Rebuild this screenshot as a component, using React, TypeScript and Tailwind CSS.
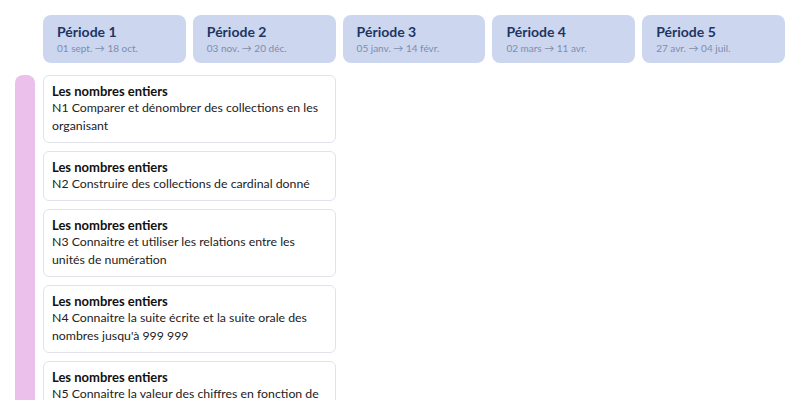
import React from 'react';

const PERIODS = [
  { name: 'Période 1', dates: '01 sept. → 18 oct.' },
  { name: 'Période 2', dates: '03 nov. → 20 déc.' },
  { name: 'Période 3', dates: '05 janv. → 14 févr.' },
  { name: 'Période 4', dates: '02 mars → 11 avr.' },
  { name: 'Période 5', dates: '27 avr. → 04 juil.' },
];

const ITEMS = [
  'N1 Comparer et dénombrer des collections en les organisant',
  'N2 Construire des collections de cardinal donné',
  'N3 Connaitre et utiliser les relations entre les unités de numération',
  "N4 Connaitre la suite écrite et la suite orale des nombres jusqu'à 999 999",
  'N5 Connaitre la valeur des chiffres en fonction de leur position dans un nombre',
];

export default function App() {
  return (
    <div className="h-[400px] w-[800px] overflow-hidden bg-white px-[15px] pt-[15px]" style={{ fontFamily: 'Lato, "Noto Sans", sans-serif' }}>
      {/* Period headers */}
      <div className="ml-7 grid grid-cols-5 gap-[7px]">
        {PERIODS.map((p) => (
          <div key={p.name} className="flex h-12 flex-col justify-center rounded-lg bg-[#ccd6ef] px-[14px]">
            <div className="text-[14px] font-bold leading-[18px] text-[#1d3563]">{p.name}</div>
            <div className="text-[10px] leading-[14px] text-[#7f8dab]">{p.dates}</div>
          </div>
        ))}
      </div>

      {/* Domain row */}
      <div className="mt-3 flex gap-2">
        <div className="w-5 shrink-0 rounded-t-lg bg-[#ebc1ec]" />
        <div className="grid flex-1 grid-cols-5 gap-[7px]">
          <div className="col-span-2 flex flex-col gap-2">
            {ITEMS.map((t) => (
              <div key={t} className="rounded-md border border-[#e1e3ea] bg-white px-2 py-[7px]">
                <div className="text-[13px] font-bold leading-4 text-[#111]">Les nombres entiers</div>
                <div className="text-[12.3px] leading-[18px] text-[#222]">{t}</div>
              </div>
            ))}
          </div>
        </div>
      </div>
    </div>
  );
}
